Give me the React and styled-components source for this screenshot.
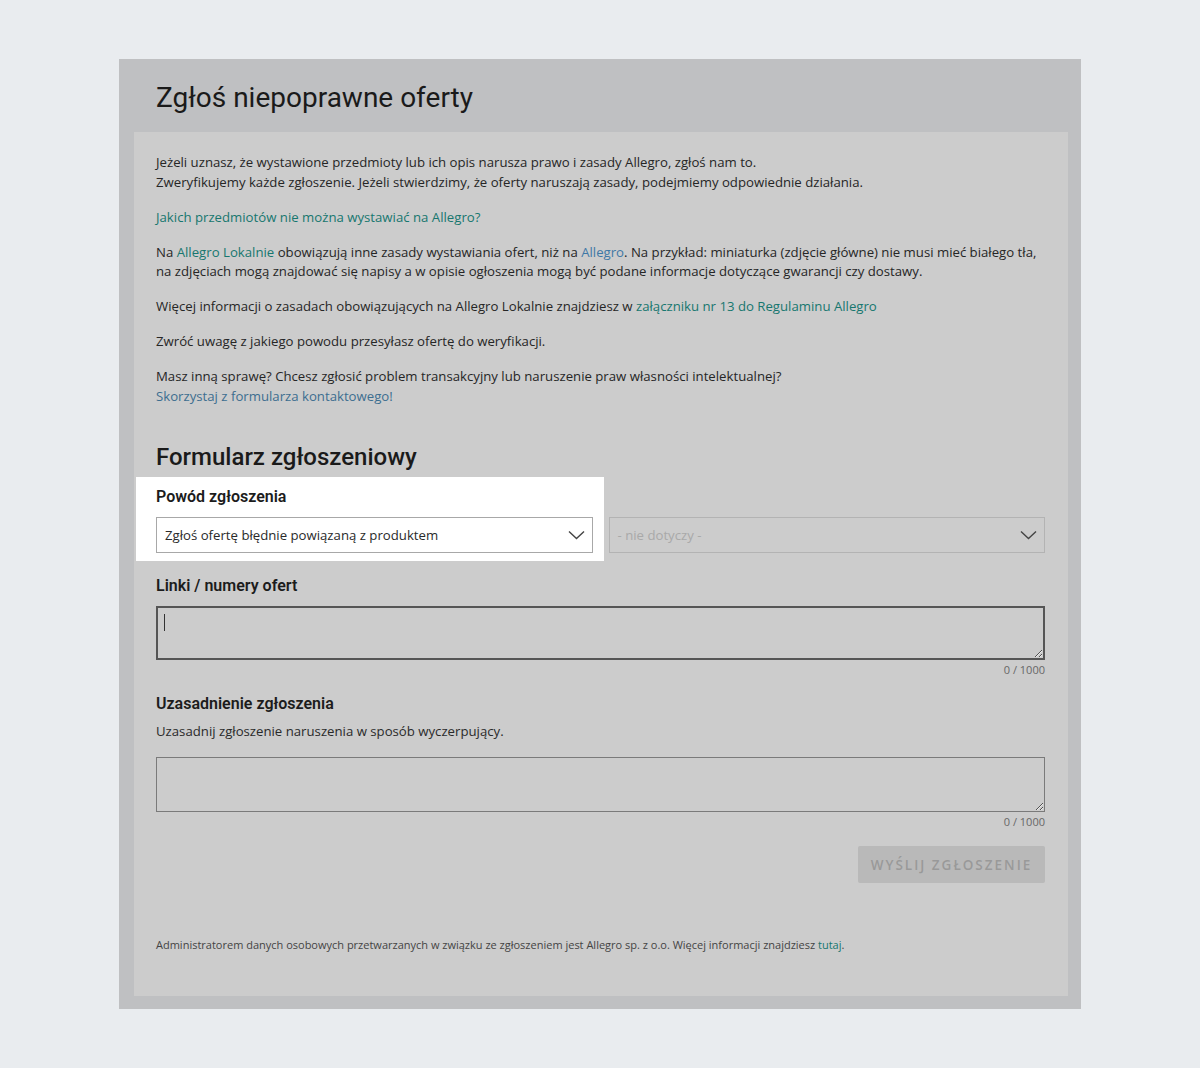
import React from 'react';
import styled, { createGlobalStyle } from 'styled-components';

const GlobalStyle = createGlobalStyle`
  body {
    margin: 0;
    background: #e9ecef;
    font-family: "Open Sans", "Liberation Sans", sans-serif;
    color: #262626;
  }
`;

const Page = styled.div`
  display: flex;
  justify-content: center;
  padding-top: 59px;
  padding-bottom: 60px;
`;

const Panel = styled.div`
  width: 962px;
  box-sizing: border-box;
  background: #bfc0c2;
  padding: 0 13px 13px 15px;
`;

const Header = styled.header`
  height: 73px;
  display: flex;
  align-items: center;
  padding: 3px 0 0 22px;
  box-sizing: border-box;
  h1 {
    margin: 0;
    font-family: Roboto, "Liberation Sans", sans-serif;
    font-weight: 400;
    font-size: 28px;
    color: #1a1a1a;
  }
`;

const Body = styled.section`
  background: #cccccc;
  padding: 21px 23px 44px 22px;
`;

const Text = styled.p`
  margin: 0 0 15.5px;
  font-size: 13.2px;
  line-height: 19.5px;
  color: #262626;
`;

const Link = styled.a`
  color: ${(p) => (p.$tone === 'blue' ? '#3f78a6' : p.$tone === 'slate' ? '#3d6e90' : '#17776f')};
  text-decoration: none;
`;

const FormTitle = styled.h2`
  margin: 36px 0 5px;
  font-family: Roboto, "Liberation Sans", sans-serif;
  font-weight: 500;
  font-size: 24px;
  line-height: 30px;
  color: #1a1a1a;
`;

const Label = styled.label`
  display: block;
  font-family: Roboto, "Liberation Sans", sans-serif;
  font-weight: 600;
  font-size: 16px;
  line-height: 20px;
  color: #1c1c1c;
  margin-bottom: ${(p) => p.$gap || 10}px;
`;

const SelectRow = styled.div`
  display: grid;
  grid-template-columns: 1fr 1fr;
  column-gap: 16px;
  align-items: end;
`;

const Spotlight = styled.div`
  background: #ffffff;
  margin: 0 -11px 0 -20px;
  padding: 10px 11px 8px 20px;
`;

const Select = styled.div`
  height: 36px;
  box-sizing: border-box;
  display: flex;
  align-items: center;
  justify-content: space-between;
  padding: 0 7px 0 8px;
  border: 1px solid ${(p) => (p.$disabled ? '#b3b3b3' : '#a8a8a8')};
  background: ${(p) => (p.$disabled ? '#cccccc' : '#ffffff')};
  color: ${(p) => (p.$disabled ? '#a9a9a9' : '#2a2a2a')};
  font-size: 13.2px;
  margin-bottom: ${(p) => (p.$disabled ? 8 : 0)}px;
  svg { flex: none; }
`;

const Field = styled.div`
  margin-top: ${(p) => p.$top || 0}px;
`;

const Hint = styled.div`
  font-size: 13.2px;
  line-height: 18px;
  color: #2a2a2a;
  margin: -2px 0 17px;
`;

const AreaWrap = styled.div`
  position: relative;
`;

const Area = styled.textarea`
  display: block;
  width: 100%;
  box-sizing: border-box;
  height: ${(p) => (p.$focused ? 54 : 55)}px;
  margin: 0;
  background: #cccccc;
  border: ${(p) => (p.$focused ? '2px solid #555555' : '1px solid #7a7a7a')};
  outline: none;
  font-family: inherit;
  font-size: 13px;
  resize: vertical;
`;

const Caret = styled.span`
  position: absolute;
  left: 8px;
  top: 8px;
  width: 1px;
  height: 17px;
  background: #333;
`;

const Counter = styled.div`
  text-align: right;
  font-size: 11px;
  line-height: 14px;
  color: #676767;
  margin-top: 3px;
`;

const Actions = styled.div`
  display: flex;
  justify-content: flex-end;
  margin-top: 17px;
`;

const Submit = styled.button`
  width: 187px;
  height: 37px;
  border: none;
  border-radius: 2px;
  background: #b9b9b9;
  color: #999999;
  font-family: "Open Sans", "Liberation Sans", sans-serif;
  font-weight: 600;
  font-size: 13.5px;
  letter-spacing: 2px;
  text-transform: uppercase;
`;

const Footnote = styled.p`
  margin: 55px 0 0;
  font-size: 11px;
  line-height: 14px;
  color: #444;
`;

const Chevron = () => (
  <svg width="17" height="10" viewBox="0 0 17 10" fill="none">
    <path d="M1 1.5 L8.5 8.5 L16 1.5" stroke="#444" strokeWidth="1.4" />
  </svg>
);

export default function App() {
  return (
    <Page>
      <GlobalStyle />
      <Panel>
        <Header>
          <h1>Zgłoś niepoprawne oferty</h1>
        </Header>
        <Body>
          <Text>
            Jeżeli uznasz, że wystawione przedmioty lub ich opis narusza prawo i zasady Allegro, zgłoś nam to.
            <br />
            Zweryfikujemy każde zgłoszenie. Jeżeli stwierdzimy, że oferty naruszają zasady, podejmiemy odpowiednie działania.
          </Text>
          <Text>
            <Link href="#">Jakich przedmiotów nie można wystawiać na Allegro?</Link>
          </Text>
          <Text>
            Na <Link href="#">Allegro Lokalnie</Link> obowiązują inne zasady wystawiania ofert, niż na{' '}
            <Link href="#" $tone="blue">Allegro</Link>. Na przykład: miniaturka (zdjęcie główne) nie musi mieć białego tła,
            <br />
            na zdjęciach mogą znajdować się napisy a w opisie ogłoszenia mogą być podane informacje dotyczące gwarancji czy dostawy.
          </Text>
          <Text>
            Więcej informacji o zasadach obowiązujących na Allegro Lokalnie znajdziesz w{' '}
            <Link href="#">załączniku nr 13 do Regulaminu Allegro</Link>
          </Text>
          <Text>Zwróć uwagę z jakiego powodu przesyłasz ofertę do weryfikacji.</Text>
          <Text>
            Masz inną sprawę? Chcesz zgłosić problem transakcyjny lub naruszenie praw własności intelektualnej?
            <br />
            <Link href="#" $tone="slate">Skorzystaj z formularza kontaktowego!</Link>
          </Text>

          <FormTitle>Formularz zgłoszeniowy</FormTitle>

          <SelectRow>
            <Spotlight>
              <Label>Powód zgłoszenia</Label>
              <Select>
                <span>Zgłoś ofertę błędnie powiązaną z produktem</span>
                <Chevron />
              </Select>
            </Spotlight>
            <Select $disabled>
              <span>- nie dotyczy -</span>
              <Chevron />
            </Select>
          </SelectRow>

          <Field $top={15}>
            <Label>Linki / numery ofert</Label>
            <AreaWrap>
              <Area $focused />
              <Caret />
            </AreaWrap>
            <Counter>0 / 1000</Counter>
          </Field>

          <Field $top={17}>
            <Label $gap={10}>Uzasadnienie zgłoszenia</Label>
            <Hint>Uzasadnij zgłoszenie naruszenia w sposób wyczerpujący.</Hint>
            <Area />
            <Counter>0 / 1000</Counter>
          </Field>

          <Actions>
            <Submit disabled>Wyślij zgłoszenie</Submit>
          </Actions>

          <Footnote>
            Administratorem danych osobowych przetwarzanych w związku ze zgłoszeniem jest Allegro sp. z o.o. Więcej informacji znajdziesz{' '}
            <Link href="#">tutaj</Link>.
          </Footnote>
        </Body>
      </Panel>
    </Page>
  );
}
